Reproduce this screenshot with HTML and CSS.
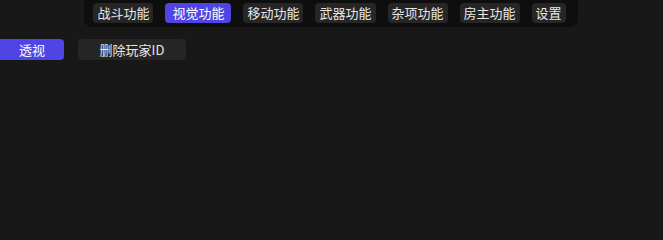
FILE: index.html
```html
<!DOCTYPE html>
<html lang="zh">
<head>
<meta charset="utf-8">
<link rel="stylesheet" href="styles.css">
</head>
<body>
<div class="app">
  <nav class="topbar">
    <button class="tab">战斗功能</button>
    <button class="tab active">视觉功能</button>
    <button class="tab">移动功能</button>
    <button class="tab">武器功能</button>
    <button class="tab">杂项功能</button>
    <button class="tab">房主功能</button>
    <button class="tab">设置</button>
  </nav>
  <div class="row">
    <button class="btn primary">透视</button>
    <button class="btn wide">删除玩家ID</button>
  </div>
</div>
</body>
</html>
```
FILE: styles.css
```css
html, body {
  margin: 0;
  padding: 0;
  background: #181818;
  width: 663px;
  height: 219px;
  overflow: hidden;
}
.app {
  font-family: "Noto Sans CJK SC", "Noto Sans", sans-serif;
  display: flex;
  flex-direction: column;
  align-items: stretch;
}
.topbar {
  align-self: center;
  display: flex;
  gap: 12px;
  padding: 3px 12px 4px 9px;
  background: #0e0e0e;
  border-radius: 0 0 8px 8px;
  margin-left: -1px;
}
.tab {
  border: none;
  background: #262626;
  color: #e6e6e6;
  font-family: inherit;
  font-size: 13px;
  line-height: 20px;
  height: 20px;
  padding: 0 4px;
  border-radius: 4px;
  white-space: nowrap;
}
.tab.active {
  background: #4f45e4;
  color: #fff;
  padding: 0 7px;
}
.row {
  display: flex;
  gap: 14px;
  margin-top: 12px;
}
.btn {
  border: none;
  font-family: inherit;
  font-size: 13px;
  height: 21px;
  line-height: 21px;
  padding: 0;
  border-radius: 4px;
  color: #e6e6e6;
  background: #262626;
}
.btn.primary {
  width: 64px;
  background: #4f45e4;
  color: #fff;
  border-radius: 0 4px 4px 0;
}
.btn.wide {
  width: 108px;
}
```
